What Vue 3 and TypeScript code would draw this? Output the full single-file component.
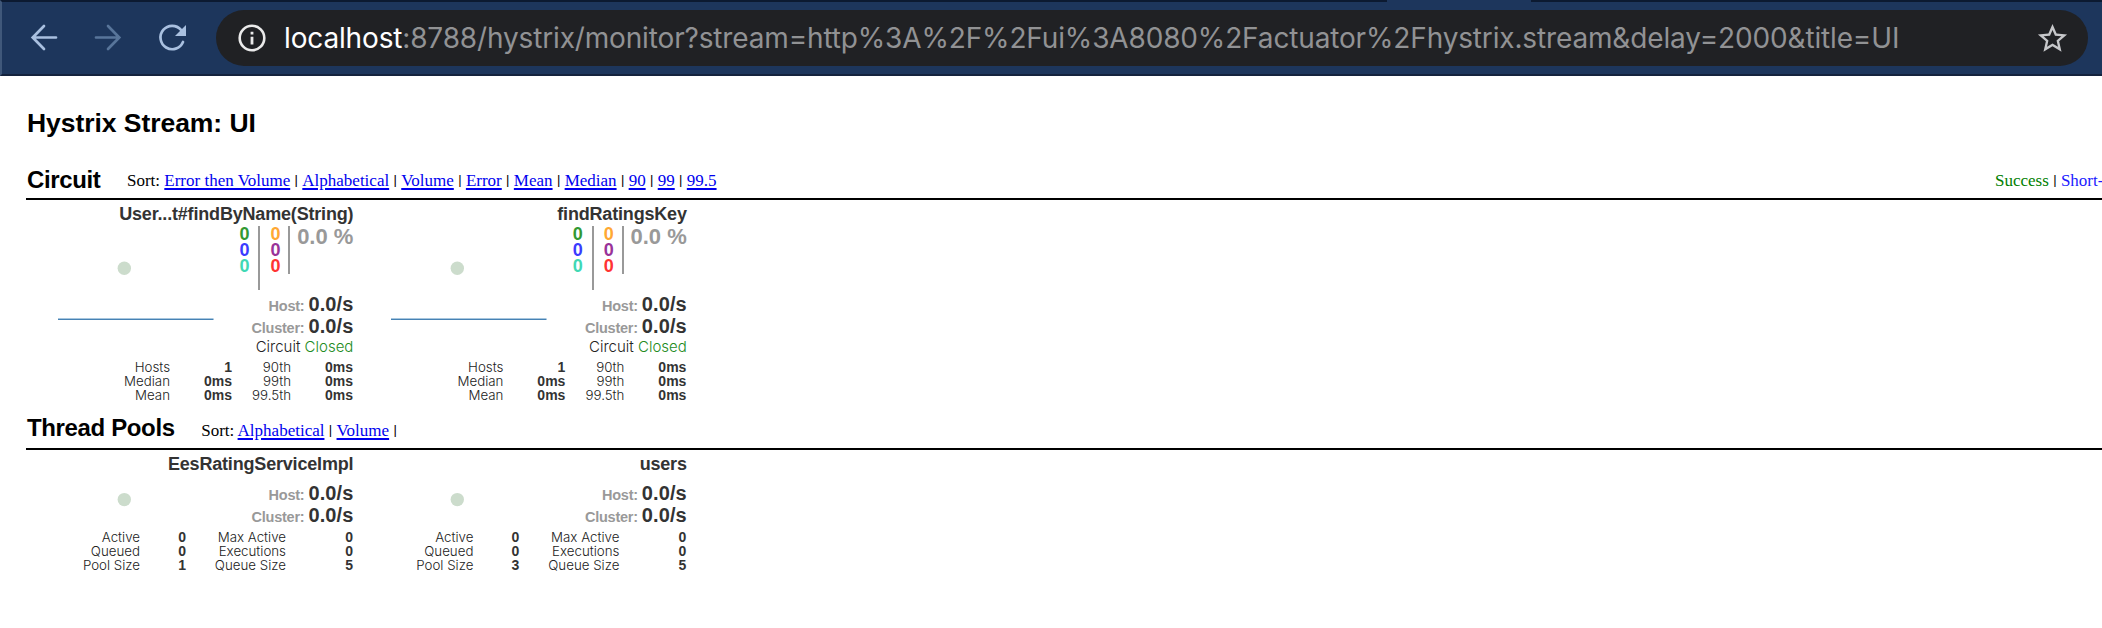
<script setup lang="ts">
interface Row { a: string; av: string; b: string; bv: string }
interface Monitor { name: string; rows: Row[] }

const circuitSorts: string[] = ['Error then Volume', 'Alphabetical', 'Volume', 'Error', 'Mean', 'Median', '90', '99', '99.5']
const poolSorts: string[] = ['Alphabetical', 'Volume']
const latency: Row[] = [
  { a: 'Hosts', av: '1', b: '90th', bv: '0ms' },
  { a: 'Median', av: '0ms', b: '99th', bv: '0ms' },
  { a: 'Mean', av: '0ms', b: '99.5th', bv: '0ms' },
]
const poolRows = (size: string): Row[] => [
  { a: 'Active', av: '0', b: 'Max Active', bv: '0' },
  { a: 'Queued', av: '0', b: 'Executions', bv: '0' },
  { a: 'Pool Size', av: size, b: 'Queue Size', bv: '5' },
]
const circuits: Monitor[] = [
  { name: 'User...t#findByName(String)', rows: latency },
  { name: 'findRatingsKey', rows: latency },
]
const pools: Monitor[] = [
  { name: 'EesRatingServiceImpl', rows: poolRows('1') },
  { name: 'users', rows: poolRows('3') },
]
</script>

<template>
  <div class="window">
    <header class="toolbar">
      <div class="tab-foot"></div>
      <svg class="nav" width="216" height="72" viewBox="0 0 216 72" fill="none">
        <path d="M56 37.500H34M44 26L32.700 37.500L44 49" stroke="#a9c0e0" stroke-width="2.700" stroke-linecap="round" />
        <path d="M96 37.500H118M108 26L119.300 37.500L108 49" stroke="#58759a" stroke-width="2.700" stroke-linecap="round" />
        <path d="M181 29.800A11.700 11.700 0 1 0 183 42" stroke="#a9c0e0" stroke-width="2.700" stroke-linecap="round" />
        <path d="M186 25V36H175Z" fill="#a9c0e0" />
      </svg>
      <div class="address">
        <svg class="info" width="28" height="28" viewBox="0 0 28 28" fill="none">
          <circle cx="14" cy="14" r="12.300" stroke="#eaeaea" stroke-width="2.600" />
          <path d="M14 12.800V20.500M14 7.800V10.500" stroke="#eaeaea" stroke-width="2.800" />
        </svg>
        <span class="url"><b>localhost</b>:8788/hystrix/monitor?stream=http%3A%2F%2Fui%3A8080%2Factuator%2Fhystrix.stream&amp;delay=2000&amp;title=UI</span>
        <svg class="star" width="35" height="35" viewBox="0 0 24 24" fill="#c6c7ca">
          <path d="M22 9.240l-7.190-.620L12 2 9.190 8.630 2 9.240l5.460 4.730L5.820 21 12 17.270 18.180 21l-1.630-7.030L22 9.240zM12 15.400l-3.760 2.270 1-4.280-3.320-2.880 4.380-.380L12 6.100l1.710 4.040 4.380.380-3.320 2.880 1 4.280L12 15.400z" />
        </svg>
      </div>
    </header>

    <main>
      <h1>Hystrix Stream: UI</h1>
      <section>
        <div class="bar">
          <h2 class="circuit-title">Circuit</h2>
          <div class="sort">Sort: <template v-for="(s, i) in circuitSorts" :key="s"><i v-if="i" class="sep">|</i><a>{{ s }}</a></template></div>
          <div class="legend"><span class="ok">Success</span><i class="sep">|</i><span class="short">Short-</span></div>
        </div>
        <div class="cards circuits">
          <article v-for="c in circuits" :key="c.name" class="card">
            <svg class="chart" width="333" height="204" viewBox="0 0 333 204">
              <circle cx="98.300" cy="68.300" r="6.700" fill="#ccdccc" />
              <path d="M32 118.500H187.500" stroke="#c8dcec" stroke-width="1" />
              <path d="M32 119.300H187.500" stroke="#4682b4" stroke-width="1.200" />
            </svg>
            <h3>{{ c.name }}</h3>
            <div class="counters">
              <div class="col first"><b class="success">0</b><b class="shorted">0</b><b class="bad">0</b></div>
              <div class="col second"><b class="timeout">0</b><b class="rejected">0</b><b class="failure">0</b></div>
              <div class="pct">0.0 %</div>
            </div>
            <div class="rate"><span>Host:</span><b>0.0/s</b></div>
            <div class="rate"><span>Cluster:</span><b>0.0/s</b></div>
            <div class="state">Circuit <em>Closed</em></div>
            <div class="stats">
              <div v-for="r in c.rows" :key="r.a" class="row lat"><span>{{ r.a }}</span><b>{{ r.av }}</b><span>{{ r.b }}</span><b>{{ r.bv }}</b></div>
            </div>
          </article>
        </div>
      </section>
      <section>
        <div class="bar">
          <h2>Thread Pools</h2>
          <div class="sort">Sort: <template v-for="s in poolSorts" :key="s"><a>{{ s }}</a><i class="sep">|</i></template></div>
        </div>
        <div class="cards">
          <article v-for="c in pools" :key="c.name" class="card pool">
            <svg class="chart" width="333" height="120" viewBox="0 0 333 120"><circle cx="98.300" cy="49.600" r="6.700" fill="#ccdccc" /></svg>
            <h3>{{ c.name }}</h3>
            <div class="rate"><span>Host:</span><b>0.0/s</b></div>
            <div class="rate"><span>Cluster:</span><b>0.0/s</b></div>
            <div class="stats">
              <div v-for="r in c.rows" :key="r.a" class="row thr"><span>{{ r.a }}</span><b>{{ r.av }}</b><span>{{ r.b }}</span><b>{{ r.bv }}</b></div>
            </div>
          </article>
        </div>
      </section>
    </main>
  </div>
</template>

<style>
body { margin: 0; background: #fff; overflow: hidden; }
</style>
<style scoped>
* { box-sizing: border-box; }
.window { width: 2102px; height: 628px; overflow: hidden; background: #fff; font-family: "Liberation Sans", Arial, sans-serif; color: #333; }
.toolbar { position: relative; height: 76px; background: #1d365c; border-top: 2px solid #0c1a31; border-bottom: 2px solid #14233d; border-left: 2px solid #40587a; display: flex; }
.tab-foot { position: absolute; left: 1385px; top: -2px; width: 144px; height: 2px; background: #1d365c; }
.nav { flex: none; margin-left: -2px; margin-top: -2px; }
.address { width: 1872px; height: 56px; margin-top: 8px; border-radius: 28px; background: #202124; display: flex; align-items: center; padding: 0 18px 0 22px; }
.info { flex: none; }
.url { flex: 1; margin-left: 18px; font: 400 28px/56px Inter, sans-serif; letter-spacing: -0.150px; color: #919294; white-space: nowrap; }
.url b { font-weight: 400; color: #fff; }
.star { flex: none; }
main { padding-left: 26px; }
h1, h2, h3 { margin: 0; color: #000; font-weight: 700; white-space: nowrap; }
h1 { height: 82px; padding: 30px 0 0 1px; font-size: 26.500px; line-height: 34px; letter-spacing: -0.050px; }
.bar { height: 42px; border-bottom: 2px solid #000; display: flex; align-items: flex-start; white-space: nowrap; }
h2 { font-size: 24px; line-height: 40px; margin-left: 1px; letter-spacing: -0.360px; }
.circuit-title { line-height: 44px; }
.sort, .legend { font: 17px/45px "Liberation Serif", "Times New Roman", serif; color: #000; height: 40px; }
.sort { margin-left: 26.500px; }
.sort a { color: #00e; text-decoration: underline; text-decoration-thickness: 2px; text-underline-offset: 2px; }
.legend { margin-left: auto; width: 107px; }
.ok { color: green; }
.short { color: #1a1aff; }
.sep { display: inline-block; margin: 0 4.350px; font: normal 13px/13px "Liberation Sans", Arial, sans-serif; vertical-align: 2.500px; color: #000; }
.cards { display: flex; }
.circuits { height: 208px; }
.card { position: relative; width: 333.400px; padding-right: 6px; flex: none; }
.chart { position: absolute; left: 0; top: 0; }
h3 { height: 26px; padding-top: 1px; color: #333; font-size: 18px; line-height: 26px; text-align: right; letter-spacing: -0.180px; }
.counters { display: flex; justify-content: flex-end; height: 67px; }
.col { display: flex; flex-direction: column; text-align: right; font-size: 18px; line-height: 16px; border-right: 2px solid #999; }
.first { height: 64px; padding-right: 9px; }
.second { height: 48px; width: 30px; padding-right: 8px; }
.success { color: #339933; } .shorted { color: #3b3bff; } .bad { color: #40d8b4; }
.timeout { color: #ffa833; } .rejected { color: #993399; } .failure { color: #ff3333; }
.pct { width: 63px; text-align: right; font-size: 22px; line-height: 22px; font-weight: 700; color: #999; white-space: nowrap; }
.rate { display: flex; justify-content: flex-end; align-items: baseline; gap: 4px; height: 22px; line-height: 22px; font-size: 20px; }
.rate span { font-size: 14.500px; letter-spacing: -0.250px; color: #999; font-weight: 700; }
.rate b { letter-spacing: 0.100px; }
.state { font: 300 15px/19px Inter, sans-serif; text-align: right; color: #222; }
.state em { font-style: normal; color: #228b22; }
.stats { margin-top: 4px; }
.row { display: grid; height: 14px; font-size: 14px; line-height: 14px; text-align: right; white-space: nowrap; }
.row span { font-family: Inter, sans-serif; font-weight: 300; font-size: 13.300px; color: #222; }
.lat { grid-template-columns: 144px 62px 59px 62px; }
.thr { grid-template-columns: 114px 46px 100px 67px; }
.pool h3 { margin-bottom: 6px; }
</style>
